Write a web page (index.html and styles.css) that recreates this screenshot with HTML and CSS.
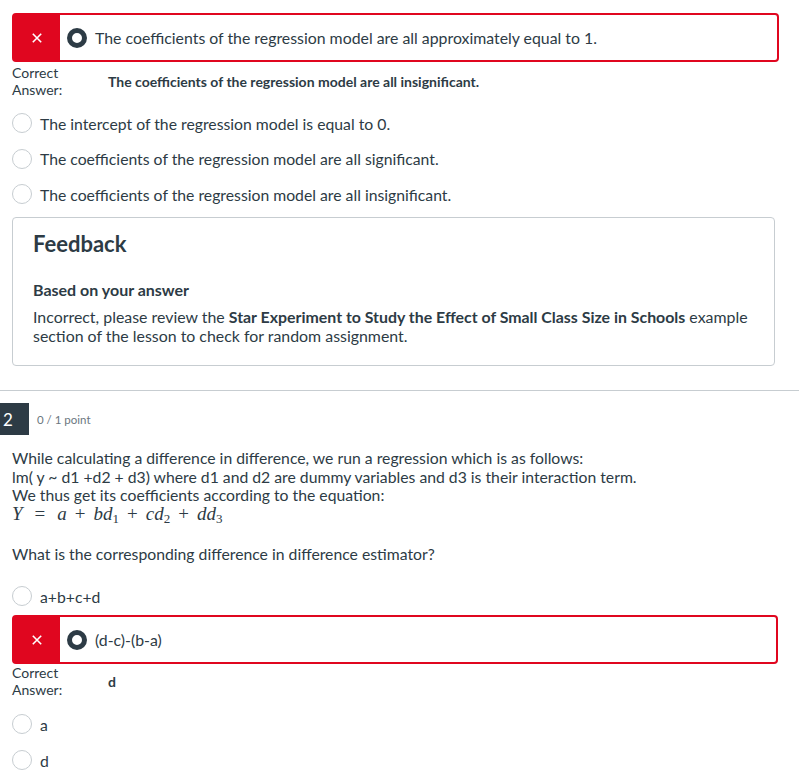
FILE: index.html
```html
<!DOCTYPE html>
<html>
<head>
<meta charset="utf-8">
<link rel="stylesheet" href="styles.css">
</head>
<body>
<div class="page">
  <div class="answer-wrong first">
    <div class="mark"><svg width="10" height="10" viewBox="0 0 10 10"><path d="M0.8 0.8 L9.2 9.2 M9.2 0.8 L0.8 9.2" stroke="#fff" stroke-width="1.6" fill="none"/></svg></div>
    <div class="radio-filled"></div>
    <div class="answer-text">The coefficients of the regression model are all approximately equal to 1.</div>
  </div>
  <div class="correct-row">
    <div class="correct-label">Correct<br>Answer:</div>
    <div class="correct-value">The coefficients of the regression model are all insignificant.</div>
  </div>
  <div class="options">
    <div class="option"><span class="radio"></span><span>The intercept of the regression model is equal to 0.</span></div>
    <div class="option"><span class="radio"></span><span>The coefficients of the regression model are all significant.</span></div>
    <div class="option"><span class="radio"></span><span>The coefficients of the regression model are all insignificant.</span></div>
  </div>
  <div class="feedback">
    <h2 class="feedback-title">Feedback</h2>
    <div class="feedback-sub">Based on your answer</div>
    <p class="feedback-text">Incorrect, please review the <b>Star Experiment to Study the Effect of Small Class Size in Schools</b> example section of the lesson to check for random assignment.</p>
  </div>
</div>
<hr class="divider">
<div class="q-header">
  <div class="q-num">2</div>
  <div class="q-points">0 / 1 point</div>
</div>
<div class="page">
  <div class="q-text">
    While calculating a difference in difference, we run a regression which is as follows:<br>
    lm( y ~ d1 +d2 + d3) where d1 and d2 are dummy variables and d3 is their interaction term.<br>
    We thus get its coefficients according to the equation:<br>
    <span class="math"><i>Y</i><span class="eq">=</span><i>a</i><span class="op">+</span><i>bd</i><sub>1</sub><span class="op">+</span><i>cd</i><sub>2</sub><span class="op">+</span><i>dd</i><sub>3</sub></span>
  </div>
  <div class="q-ask">What is the corresponding difference in difference estimator?</div>
  <div class="option first-opt"><span class="radio"></span><span>a+b+c+d</span></div>
  <div class="answer-wrong second">
    <div class="mark"><svg width="10" height="10" viewBox="0 0 10 10"><path d="M0.8 0.8 L9.2 9.2 M9.2 0.8 L0.8 9.2" stroke="#fff" stroke-width="1.6" fill="none"/></svg></div>
    <div class="radio-filled"></div>
    <div class="answer-text">(d-c)-(b-a)</div>
  </div>
  <div class="correct-row two">
    <div class="correct-label">Correct<br>Answer:</div>
    <div class="correct-value">d</div>
  </div>
  <div class="options two">
    <div class="option"><span class="radio"></span><span>a</span></div>
    <div class="option"><span class="radio"></span><span>d</span></div>
  </div>
</div>
</body>
</html>
```

FILE: styles.css
```css
html, body {
  margin: 0;
  padding: 0;
  background: #fff;
}
body {
  font-family: Lato, "Open Sans", sans-serif;
  color: #2d3b45;
  width: 799px;
  overflow: hidden;
}
.page {
  padding: 0 0 0 12px;
}
.answer-wrong {
  display: flex;
  align-items: center;
  box-sizing: border-box;
  width: 767px;
  height: 49px;
  border: 2px solid #e0061f;
  border-radius: 4px;
}
.answer-wrong.first {
  margin-top: 13px;
}
.answer-wrong.second {
  margin-top: 9px;
  width: 766px;
  height: 49px;
}
.mark {
  align-self: stretch;
  width: 46px;
  background: #e0061f;
  display: flex;
  align-items: center;
  justify-content: center;
}
.radio-filled {
  box-sizing: border-box;
  width: 20px;
  height: 20px;
  border-radius: 50%;
  border: 5px solid #2d3b45;
  margin-left: 7px;
  margin-right: 8px;
  background: #fff;
  flex: none;
}
.answer-text {
  font-size: 15.85px;
}
.correct-row {
  display: flex;
  align-items: center;
  margin-top: 2px;
}
.correct-row.two {
  margin-top: 0;
}
.correct-label {
  width: 96px;
  font-size: 14px;
  line-height: 17px;
}
.correct-value {
  font-size: 14px;
  font-weight: bold;
}
.options {
  margin-top: 15px;
  display: flex;
  flex-direction: column;
  gap: 15.5px;
}
.option {
  display: flex;
  align-items: center;
  gap: 8px;
  font-size: 15.75px;
  height: 20px;
}
.radio {
  box-sizing: border-box;
  width: 20px;
  height: 20px;
  border-radius: 50%;
  border: 1px solid #c7cdd1;
  background: #fff;
  flex: none;
}
.feedback {
  box-sizing: border-box;
  width: 763px;
  height: 149px;
  margin-top: 13px;
  border: 1px solid #c7cdd1;
  border-radius: 4px;
  padding: 12px 20px 0 20px;
}
.feedback-title {
  margin: 0;
  font-size: 22px;
  font-weight: bold;
  line-height: 28px;
  color: #2d3b45;
}
.feedback-sub {
  margin-top: 22px;
  font-size: 16px;
  font-weight: bold;
  line-height: 20px;
}
.feedback-text {
  margin: 7px 0 0 0;
  font-size: 15.9px;
  line-height: 19px;
}
.divider {
  margin: 24px 0 0 0;
  border: 0;
  border-top: 1px solid #c7cdd1;
  height: 0;
}
.q-header {
  display: flex;
  align-items: center;
  margin-top: 12px;
}
.q-num {
  width: 29px;
  height: 32px;
  background: #2d3b45;
  color: #fff;
  font-size: 17px;
  display: flex;
  align-items: center;
  padding-left: 3px;
  box-sizing: border-box;
}
.q-points {
  margin-left: 8px;
  font-size: 11.5px;
  color: #6b7780;
}
.q-text {
  margin-top: 14px;
  font-size: 15.75px;
  line-height: 18.5px;
}
.math {
  font-family: "Liberation Serif", "DejaVu Serif", serif;
  font-size: 19px;
  line-height: 16px;
}
.math sub {
  font-size: 13px;
  font-style: normal;
  vertical-align: -3px;
  line-height: 0;
}
.math .eq {
  margin: 0 12px;
}
.math .op {
  margin: 0 8px;
}
.q-ask {
  margin-top: 21px;
  font-size: 15.75px;
}
.first-opt {
  margin-top: 23px;
}
.options.two {
  margin-top: 16px;
  gap: 16px;
}
```
